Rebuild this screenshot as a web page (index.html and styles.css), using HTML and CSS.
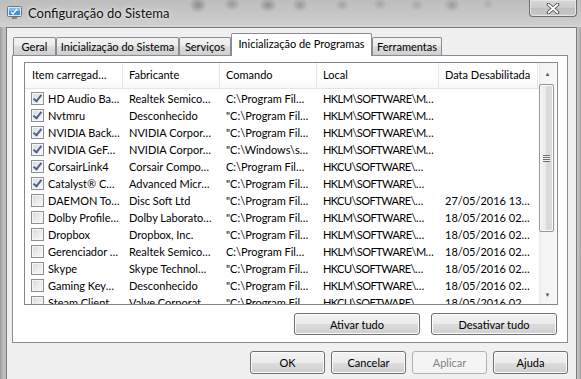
FILE: index.html
```html
<!DOCTYPE html>
<html>
<head>
	<title>Configuração do Sistema</title>
	<meta charset="utf-8">
	<link rel="stylesheet" href="styles.css">
</head>
<body>
<div id="janela">
	<div class="titulo">
		<svg class="icone" width="15" height="13" viewBox="0 0 15 13">
			<rect x="0.5" y="0.5" width="14" height="10" rx="1" fill="#dfe6ee" stroke="#6a7584"/>
			<rect x="2" y="2" width="11" height="7" fill="#3d8fd8"/>
			<rect x="2" y="2" width="11" height="3" fill="#7fbcf0"/>
			<path d="M4 6 L6 8 L10 3" fill="none" stroke="#ffffff" stroke-width="1.3"/>
			<rect x="5" y="11" width="5" height="2" fill="#7b8594"/>
		</svg>
		<span class="titulo-texto">Configuração do Sistema</span>
		<div class="fechar">
			<svg width="14" height="11" viewBox="0 0 14 11">
				<path d="M2.5 1.5 L11.5 9.5 M11.5 1.5 L2.5 9.5" stroke="#4a4a4a" stroke-width="3.6" stroke-linecap="round"/>
				<path d="M2.5 1.5 L11.5 9.5 M11.5 1.5 L2.5 9.5" stroke="#ffffff" stroke-width="1.8" stroke-linecap="round"/>
			</svg>
		</div>
	</div>

	<div class="cliente">
		<div class="abas">
			<div class="aba" style="width:43px">Geral</div>
			<div class="aba" style="width:123px">Inicialização do Sistema</div>
			<div class="aba" style="width:52px">Serviços</div>
			<div class="aba ativa" style="width:141px">Inicialização de Programas</div>
			<div class="aba" style="width:70px">Ferramentas</div>
		</div>

		<div class="painel">
			<div class="lista">
				<div class="lista-corpo">
					<div class="cabecalho">
						<div class="col">Item carregad…</div>
						<div class="col">Fabricante</div>
						<div class="col">Comando</div>
						<div class="col">Local</div>
						<div class="col">Data Desabilitada</div>
					</div>

					<div class="linha"><div class="item"><span class="caixa marcada"></span>HD Audio Ba…</div><div>Realtek Semico…</div><div>C:\Program Fil…</div><div>HKLM\SOFTWARE\M…</div><div></div></div>
					<div class="linha"><div class="item"><span class="caixa marcada"></span>Nvtmru</div><div>Desconhecido</div><div>"C:\Program Fil…</div><div>HKLM\SOFTWARE\M…</div><div></div></div>
					<div class="linha"><div class="item"><span class="caixa marcada"></span>NVIDIA Back…</div><div>NVIDIA Corpor…</div><div>"C:\Program Fil…</div><div>HKLM\SOFTWARE\M…</div><div></div></div>
					<div class="linha"><div class="item"><span class="caixa marcada"></span>NVIDIA GeF…</div><div>NVIDIA Corpor…</div><div>"C:\Windows\s…</div><div>HKLM\SOFTWARE\M…</div><div></div></div>
					<div class="linha"><div class="item"><span class="caixa marcada"></span>CorsairLink4</div><div>Corsair Compo…</div><div>C:\Program Fil…</div><div>HKCU\SOFTWARE\…</div><div></div></div>
					<div class="linha"><div class="item"><span class="caixa marcada"></span>Catalyst® C…</div><div>Advanced Micr…</div><div>"C:\Program Fil…</div><div>HKLM\SOFTWARE\…</div><div></div></div>
					<div class="linha"><div class="item"><span class="caixa"></span>DAEMON To…</div><div>Disc Soft Ltd</div><div>"C:\Program Fil…</div><div>HKCU\SOFTWARE\…</div><div>27/05/2016 13…</div></div>
					<div class="linha"><div class="item"><span class="caixa"></span>Dolby Profile…</div><div>Dolby Laborato…</div><div>"C:\Program Fil…</div><div>HKLM\SOFTWARE\…</div><div>18/05/2016 02…</div></div>
					<div class="linha"><div class="item"><span class="caixa"></span>Dropbox</div><div>Dropbox, Inc.</div><div>"C:\Program Fil…</div><div>HKLM\SOFTWARE\…</div><div>18/05/2016 02…</div></div>
					<div class="linha"><div class="item"><span class="caixa"></span>Gerenciador …</div><div>Realtek Semico…</div><div>C:\Program Fil…</div><div>HKLM\SOFTWARE\M…</div><div>18/05/2016 02…</div></div>
					<div class="linha"><div class="item"><span class="caixa"></span>Skype</div><div>Skype Technol…</div><div>"C:\Program Fil…</div><div>HKCU\SOFTWARE\…</div><div>18/05/2016 02…</div></div>
					<div class="linha"><div class="item"><span class="caixa"></span>Gaming Key…</div><div>Desconhecido</div><div>"C:\Program Fil…</div><div>HKLM\SOFTWARE\…</div><div>18/05/2016 02…</div></div>
					<div class="linha"><div class="item"><span class="caixa"></span>Steam Client</div><div>Valve Corporat…</div><div>"C:\Program Fil…</div><div>HKCU\SOFTWARE\…</div><div>18/05/2016 02…</div></div>
				</div>

				<div class="rolagem">
					<div class="seta">▲</div>
					<div class="barra"><span class="grip"></span></div>
					<div class="trilho"></div>
					<div class="seta">▼</div>
				</div>
			</div>

			<div class="acoes">
				<button class="botao largo">Ativar tudo</button>
				<button class="botao largo">Desativar tudo</button>
			</div>
		</div>

		<div class="rodape">
			<button class="botao">OK</button>
			<button class="botao">Cancelar</button>
			<button class="botao desativado">Aplicar</button>
			<button class="botao">Ajuda</button>
		</div>
	</div>
</div>
</body>
</html>
```

FILE: styles.css
```css
body {
	margin: 0;
	font-family: Lato, "Liberation Sans", sans-serif;
	font-size: 11px;
	color: #000;
}

#janela {
	width: 581px;
	height: 379px;
	overflow: hidden;
	background: linear-gradient(to right, #9c9c9c, #c2c2c2 4px, #b8b8b8 6px, #b8b8b8 576px, #c4c4c4 578px, #a2a2a2);
}

/* barra de titulo (vidro borrado) */
.titulo {
	height: 27px;
	display: flex;
	align-items: flex-start;
	background:
		radial-gradient(ellipse 9px 8px at 198px 5px, #8c8c8c, transparent),
		radial-gradient(ellipse 8px 7px at 232px 4px, #999, transparent),
		radial-gradient(ellipse 9px 7px at 268px 5px, #8f8f8f, transparent),
		radial-gradient(ellipse 8px 7px at 300px 5px, #9a9a9a, transparent),
		radial-gradient(ellipse 7px 6px at 342px 5px, #a3a3a3, transparent),
		radial-gradient(ellipse 7px 6px at 380px 4px, #a6a6a6, transparent),
		radial-gradient(ellipse 7px 6px at 417px 5px, #a8a8a8, transparent),
		radial-gradient(ellipse 8px 7px at 452px 5px, #9b9b9b, transparent),
		radial-gradient(ellipse 6px 6px at 488px 4px, #b0b0b0, transparent),
		linear-gradient(to bottom, #bdbdbd, #cacaca 20px, #d2d2d2);
}
.icone {
	margin: 6px 0 0 7px;
}
.titulo-texto {
	margin: 5px 0 0 6px;
	font-size: 13px;
	color: #111;
	text-shadow: 0 0 6px #e8e8e8, 0 0 3px #eeeeee;
}
.fechar {
	margin-left: auto;
	margin-right: 4px;
	width: 48px;
	height: 17px;
	box-sizing: border-box;
	border: 1px solid #6e6e6e;
	border-top: none;
	border-radius: 0 0 4px 4px;
	background: linear-gradient(to bottom, #d7d7d7, #cbcbcb 50%, #bfbfbf 50%, #c9c9c9);
	box-shadow: inset 0 0 0 1px #e4e4e4;
	display: flex;
	align-items: center;
	justify-content: center;
}

/* area cliente */
.cliente {
	margin-left: 6px;
	width: 571px;
	height: 360px;
	box-sizing: border-box;
	border: 1px solid #7b7b7b;
	background-color: #f0f0f0;
	padding: 5px 8px 0 5px;
}

.abas {
	display: flex;
	align-items: flex-end;
	height: 22px;
	padding-left: 1px;
	position: relative;
	z-index: 1;
}
.aba {
	height: 18px;
	box-sizing: border-box;
	border: 1px solid #898c95;
	border-bottom: none;
	border-radius: 2px 2px 0 0;
	background: linear-gradient(to bottom, #f2f2f2, #ebebeb 50%, #dddddd 50%, #cfcfcf);
	text-align: center;
	line-height: 17px;
	white-space: nowrap;
}
.aba.ativa {
	height: 23px;
	margin-bottom: -1px;
	background: #ffffff;
	line-height: 20px;
}

.painel {
	height: 288px;
	box-sizing: border-box;
	border: 1px solid #898c95;
	background-color: #ffffff;
	padding: 6px 9px 0 11px;
}

.lista {
	display: flex;
	height: 243px;
	box-sizing: border-box;
	border: 1px solid #828790;
	overflow: hidden;
}
.lista-corpo {
	width: 514px;
	overflow: hidden;
}

.cabecalho, .linha {
	display: grid;
	grid-template-columns: 98px 97px 97px 122px 99px;
	white-space: nowrap;
}
.cabecalho {
	height: 25px;
	line-height: 24px;
	border-bottom: 1px solid #e5e5e5;
	background: linear-gradient(to bottom, #ffffff, #ffffff 60%, #f7f8f9);
	margin-bottom: 1px;
}
.col {
	border-right: 1px solid #e3e6ea;
	padding-left: 6px;
	overflow: hidden;
}
.col:first-child {
	padding-left: 7px;
}

.linha {
	height: 17px;
	line-height: 17px;
}
.linha > div {
	overflow: hidden;
	padding-left: 6px;
}
/* coluna Local: maiusculas mais estreitas como no original */
.linha > div:nth-child(4) {
	letter-spacing: -0.55px;
}
.linha > .item {
	display: flex;
	align-items: center;
	gap: 4px;
}

.caixa {
	flex: none;
	position: relative;
	width: 13px;
	height: 13px;
	box-sizing: border-box;
	border: 1px solid #8e8f8f;
	background: linear-gradient(135deg, #d6d8da, #eeeeee 60%, #fafafa);
	box-shadow: inset 0 0 0 1px #f6f6f6;
}
.caixa.marcada::after {
	content: "";
	position: absolute;
	left: 3px;
	top: 0px;
	width: 3px;
	height: 7px;
	border: solid #4f628e;
	border-width: 0 2px 2px 0;
	transform: rotate(38deg);
}

/* barra de rolagem */
.rolagem {
	width: 17px;
	display: flex;
	flex-direction: column;
	background: linear-gradient(to right, #e6e6e6, #f4f4f4 2px, #f6f6f6);
}
.seta {
	height: 20px;
	font-size: 6px;
	color: #5a5a5a;
	text-align: center;
	line-height: 21px;
}
.barra {
	height: 148px;
	margin: 1px 2px 0 0;
	box-sizing: border-box;
	border: 1px solid #979797;
	border-radius: 2px;
	background: linear-gradient(to right, #f4f4f4, #e8e8e8 50%, #d9d9d9 50%, #dcdcdc);
	box-shadow: inset 0 0 0 1px #f9f9f9;
	display: flex;
	align-items: center;
	justify-content: center;
}
.grip {
	width: 7px;
	height: 7px;
	background: repeating-linear-gradient(to bottom, #6d6d6d 0, #6d6d6d 1px, #f2f2f2 1px, #f2f2f2 2px);
}
.trilho {
	flex: 1;
}

/* botoes */
.botao {
	width: 75px;
	height: 23px;
	box-sizing: border-box;
	border: 1px solid #707070;
	border-radius: 3px;
	background: linear-gradient(to bottom, #f2f2f2, #ebebeb 50%, #dddddd 50%, #cfcfcf);
	box-shadow: inset 0 0 0 1px #fcfcfc;
	font-family: Lato, "Liberation Sans", sans-serif;
	font-size: 11px;
	color: #000;
	padding: 0;
}
.botao.largo {
	width: 126px;
	height: 22px;
}
.botao.desativado {
	border-color: #adb2b5;
	background: #f4f4f4;
	box-shadow: none;
	color: #838383;
}

.acoes {
	display: flex;
	justify-content: flex-end;
	gap: 11px;
	margin: 8px 1px 0 0;
}

.rodape {
	display: flex;
	justify-content: flex-end;
	gap: 6px;
	margin-top: 8px;
	padding-right: 0;
}
```
